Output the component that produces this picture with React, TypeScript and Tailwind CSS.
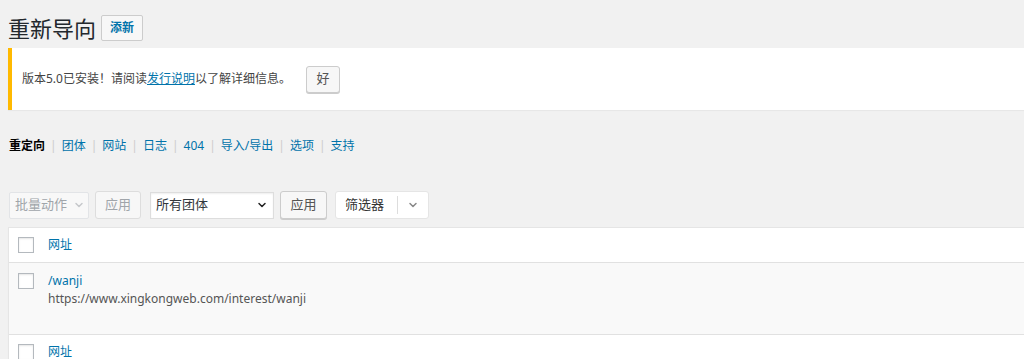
import React from 'react';

const Chevron = ({ className = '' }: { className?: string }) => (
  <svg width="10" height="10" viewBox="0 0 20 20" className={className} fill="none" stroke="currentColor" strokeWidth="3" strokeLinecap="round" strokeLinejoin="round">
    <path d="M4 7l6 6 6-6" />
  </svg>
);

const Checkbox = () => (
  <span className="block w-4 h-4 bg-white border border-[#b4b9be] shadow-[inset_0_1px_2px_rgba(0,0,0,0.1)]" />
);

const navItems = ['团体', '网站', '日志', '404', '导入/导出', '选项', '支持'];

export default function App() {
  return (
    <div className="min-h-screen bg-[#f1f1f1] text-[12px] text-[#444] font-['Segoe_UI','Noto_Sans','Noto_Sans_CJK_SC',sans-serif] overflow-hidden">
      <div className="pl-2">
        {/* title */}
        <div className="flex items-center pt-[11px] h-[44px]">
          <h1 className="text-[22px] leading-[28px] text-[#23282d] font-normal">重新导向</h1>
          <button className="ml-[5px] h-[26px] w-[42px] border border-[#ccc] bg-[#f7f7f7] rounded-[2px] text-[12px] font-semibold text-[#0073aa] leading-none">
            添新
          </button>
        </div>

        {/* notice */}
        <div className="mt-[4px] h-[62px] bg-white border-l-4 border-[#ffb900] shadow-[0_1px_1px_rgba(0,0,0,0.04)] flex items-center pl-[10px]">
          <p>
            版本5.0已安装！请阅读<a className="text-[#0073aa] underline">发行说明</a>以了解详细信息。
          </p>
          <button className="ml-[15px] h-[27px] w-[34px] border border-[#ccc] bg-[#f7f7f7] rounded-[3px] shadow-[0_1px_0_#ccc] text-[#555] text-[13px]">
            好
          </button>
        </div>

        {/* subsubsub */}
        <div className="mt-[26px] flex items-center h-[20px] pl-px">
          <span className="font-bold text-[#000]">重定向</span>
          {navItems.map((n) => (
            <React.Fragment key={n}>
              <span className="text-[#ccc] mx-[5px]">|</span>
              <a className="text-[#0073aa]">{n}</a>
            </React.Fragment>
          ))}
        </div>

        {/* tablenav */}
        <div className="mt-[35px] flex items-center h-[28px] pl-px text-[13px]">
          <div className="w-[80px] h-[27px] border border-[#e2e4e7] bg-[rgba(255,255,255,0.5)] flex items-center justify-between pl-[5px] pr-[4px] text-[#a0a5aa] rounded-[2px]">
            <span>批量动作</span>
            <Chevron className="text-[#c6c8cb]" />
          </div>
          <button className="ml-[6px] w-[46px] h-[28px] border border-[#ddd] bg-[#f7f7f7] text-[#a0a5aa] rounded-[3px]">
            应用
          </button>
          <div className="ml-[9px] w-[124px] h-[27px] border border-[#ddd] bg-white flex items-center justify-between pl-[5px] pr-[6px] text-[#32373c] shadow-[inset_0_1px_2px_rgba(0,0,0,0.07)]">
            <span>所有团体</span>
            <Chevron className="text-[#222]" />
          </div>
          <button className="ml-[6px] w-[47px] h-[28px] border border-[#ccc] bg-[#f7f7f7] text-[#555] rounded-[3px] shadow-[0_1px_0_#ccc]">
            应用
          </button>
          <div className="ml-[8px] w-[94px] h-[28px] bg-white border border-[#e5e5e5] rounded-[3px] flex items-center">
            <span className="pl-[9px] w-[61px] text-[#333]">筛选器</span>
            <span className="w-px h-[18px] bg-[#ddd]" />
            <span className="flex-1 flex justify-center text-[#888]">
              <Chevron />
            </span>
          </div>
        </div>

        {/* table */}
        <div className="mt-[8px] bg-white border border-[#e5e5e5] border-r-0 shadow-[0_1px_1px_rgba(0,0,0,0.04)]">
          <div className="h-[35px] flex items-center border-b border-[#e1e1e1]">
            <span className="pl-[9px] w-[39px]"><Checkbox /></span>
            <a className="text-[#0073aa]">网址</a>
          </div>
          <div className="h-[71px] bg-[#f9f9f9] flex items-start pt-[9px]">
            <span className="pl-[9px] w-[39px] pt-px"><Checkbox /></span>
            <div className="leading-[18px]">
              <a className="text-[#0073aa] block">/wanji</a>
              <div className="text-[#555]">https://www.xingkongweb.com/interest/wanji</div>
            </div>
          </div>
          <div className="h-[35px] flex items-center border-t border-[#e1e1e1]">
            <span className="pl-[9px] w-[39px]"><Checkbox /></span>
            <a className="text-[#0073aa]">网址</a>
          </div>
        </div>
      </div>
    </div>
  );
}
